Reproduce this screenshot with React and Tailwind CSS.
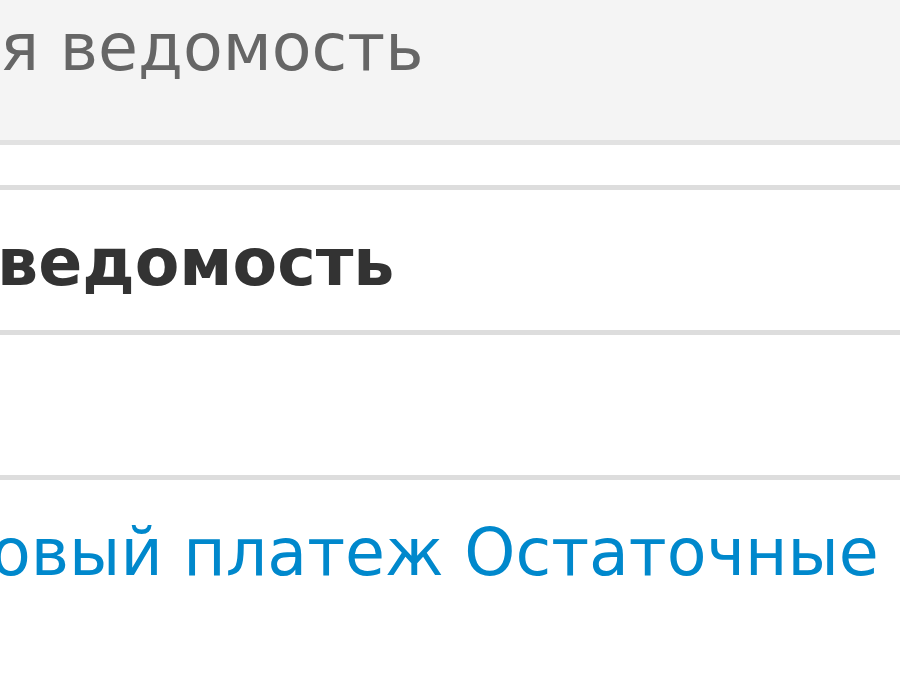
const font = { fontFamily: '"DejaVu Sans", Verdana, sans-serif' }

// zero-width anchor: the hidden prefix overflows to the left, off-screen
function Cut({ prefix, children, className = '' }) {
  return (
    <div className={`flex whitespace-nowrap ${className}`}>
      <span className="flex w-0 justify-end">{prefix}</span>
      <span>{children}</span>
    </div>
  )
}

export default function App() {
  return (
    <div className="h-[700px] w-[900px] overflow-hidden bg-white text-[65px] leading-[65px]" style={font}>
      {/* header cell */}
      <div className="h-[145px] border-b-[5px] border-[#e2e2e2] bg-[#f4f4f4] pt-[15px] text-[#666]">
        <Cut prefix="Расчетна" className="ml-[0px]">я ведомость</Cut>
      </div>

      {/* spacer row */}
      <div className="h-[45px] border-b-[5px] border-[#dddddd]" />

      {/* title row */}
      <div className="h-[145px] border-b-[5px] border-[#dddddd] pt-[40px] font-bold text-[#333]">
        <Cut prefix="Расчетная " className="ml-[-3px]">ведомость</Cut>
      </div>

      {/* empty row */}
      <div className="h-[145px] border-b-[5px] border-[#dddddd]" />

      {/* links */}
      <div className="pt-[40px] text-[#0088cc]">
        <Cut prefix="Аванс" className="ml-[-9px]">
          <a href="#">овый платеж</a> <a href="#">Остаточные платежи</a>
        </Cut>
      </div>
    </div>
  )
}
